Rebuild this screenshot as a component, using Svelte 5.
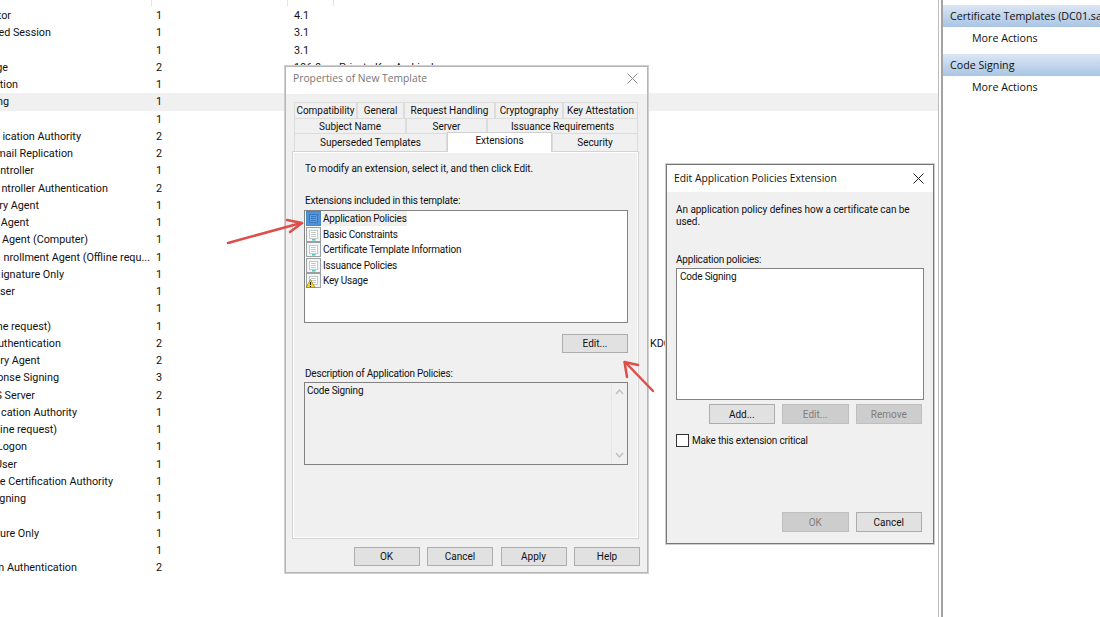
<script>
  const rows = [
    ['tor', 11, 1, '4.1', ''],
    ['ted Session', 51, 1, '3.1', ''],
    ['', 0, 1, '3.1', ''],
    ['ge', 8, 2, '106.0', 'Private Key Archival'],
    ['tion', 18, 1, '', ''],
    ['ng', 9, 1, '', ''],
    ['', 0, 1, '', ''],
    ['ication Authority', 81, 2, '', ''],
    ['mail Replication', 73, 2, '', ''],
    ['ntroller', 34, 1, '', ''],
    ['ntroller Authentication', 108, 2, '', ''],
    ['ry Agent', 39, 1, '', ''],
    ['Agent', 29, 1, '', ''],
    ['Agent (Computer)', 88, 1, '', ''],
    ['nrollment Agent (Offline requ...', 150, 1, '', ''],
    ['ignature Only', 64, 1, '', ''],
    ['ser', 15, 1, '', ''],
    ['', 0, 1, '', ''],
    ['ne request)', 51, 1, '', ''],
    ['uthentication', 61, 2, '', 'KDC', 311],
    ['ry Agent', 40, 2, '', ''],
    ['onse Signing', 59, 3, '', ''],
    ['S Server', 35, 2, '', ''],
    ['cation Authority', 77, 1, '', ''],
    ['line request)', 57, 1, '', ''],
    ['Logon', 27, 1, '', ''],
    ['User', 17, 1, '', ''],
    ['e Certification Authority', 113, 1, '', ''],
    ['gning', 26, 1, '', ''],
    ['', 0, 1, '', ''],
    ['ure Only', 39, 1, '', ''],
    ['', 0, 1, '', ''],
    ['n Authentication', 77, 2, '', '']
  ];
  const tabRows = [
    [['Compatibility', 63], ['General', 47], ['Request Handling', 91], ['Cryptography', 68], ['Key Attestation', 75]],
    [['Subject Name', 112], ['Server', 81], ['Issuance Requirements', 151]],
    [['Superseded Templates', 153], ['Extensions', 105], ['Security', 86]]
  ];
  const exts = [
    ['Application Policies', 'sel'],
    ['Basic Constraints', ''],
    ['Certificate Template Information', ''],
    ['Issuance Policies', ''],
    ['Key Usage', 'warn']
  ];
</script>

<div class="desk">
  <div class="center">
    <div class="heads"><i></i><i></i><i></i></div>
    {#each rows as r, i}
      <div class="row" class:hl={i === 5}>
        <div class="name" style:width="{r[1]}px"><span>{r[0]}</span></div>
        <div class="ver" style:margin-left="{156 - r[1]}px">{r[2]}</div>
        <div class="min">{r[3]}</div>
        <div class="purpose" style:margin-left="{r[5] || 0}px">{r[4]}</div>
      </div>
    {/each}
  </div>
  <div class="split"></div>
  <div class="actions">
    <div class="ahead">Certificate Templates (DC01.san</div>
    <div class="aitem">More Actions</div>
    <div class="ahead">Code Signing</div>
    <div class="aitem">More Actions</div>
  </div>

  <section class="win props">
    <header class="title dim"><span>Properties of New Template</span>
      <svg width="11" height="11" viewBox="0 0 11 11"><path d="M.5.5l10 10M10.500.5l-10 10" stroke="#8a8a8a" fill="none"/></svg>
    </header>
    <div class="body">
      <div class="tabs">
        {#each tabRows as tr}
          <div class="tabrow">
            {#each tr as t}
              <div class="tab" class:active={t[0] === 'Extensions'} style:width="{t[1]}px">{t[0]}</div>
            {/each}
          </div>
        {/each}
      </div>
      <div class="panel">
        <p class="hint">To modify an extension, select it, and then click Edit.</p>
        <p class="first tight">Extensions included in this template:</p>
        <div class="list">
          {#each exts as e}
            <div class="ext">
              <svg width="15" height="15" viewBox="0 0 15 15" class="ico">
                <rect x=".5" y=".5" width="14" height="14" fill={e[1] === 'sel' ? '#4f94d8' : '#f1f4f4'} stroke={e[1] === 'sel' ? '#4a86c4' : '#9a9fa1'}/>
                <rect x="3.500" y="3.500" width="8" height="8" fill={e[1] === 'sel' ? '#5f9fe0' : '#fff'} stroke={e[1] === 'sel' ? '#3a78bd' : '#c4caca'}/>
                <path d="M5 5.500h5M5 7.500h5M5 9.500h5" stroke={e[1] === 'sel' ? '#3a78bd' : '#c4caca'} fill="none"/>
                {#if e[1] === 'warn'}
                  <path d="M4.500 6.500L9 14.500H0z" fill="#f7d417" stroke="#8a7a10" stroke-width=".6"/>
                  <path d="M4.500 9v3M4.500 13v1" stroke="#222" fill="none"/>
                {:else if e[1] !== 'sel'}
                  <path d="M6 12.800h3.500" stroke="#4fc3c3" stroke-width="1.500"/>
                {/if}
              </svg>
              <span class="tight" class:seltext={e[1] === 'sel'}>{e[0]}</span>
            </div>
          {/each}
        </div>
        <div class="editrow"><button class="btn">Edit...</button></div>
        <p class="desc tight">Description of Application Policies:</p>
        <div class="descbox">
          <span class="tight">Code Signing</span>
          <div class="sb">
            <svg width="9" height="6" viewBox="0 0 9 6"><path d="M1 5l3.500-4 3.500 4" stroke="#bdbdbd" stroke-width="1.300" fill="none"/></svg>
            <svg width="9" height="6" viewBox="0 0 9 6"><path d="M1 1l3.500 4 3.500-4" stroke="#bdbdbd" stroke-width="1.300" fill="none"/></svg>
          </div>
        </div>
      </div>
      <div class="foot">
        <button class="btn">OK</button><button class="btn">Cancel</button><button class="btn">Apply</button><button class="btn">Help</button>
      </div>
    </div>
  </section>

  <section class="win edit">
    <header class="title"><span>Edit Application Policies Extension</span>
      <svg width="11" height="11" viewBox="0 0 11 11"><path d="M.5.5l10 10M10.500.5l-10 10" stroke="#222" fill="none"/></svg>
    </header>
    <div class="ebody">
      <p class="intro">An application policy defines how a certificate can be used.</p>
      <p class="lab tight">Application policies:</p>
      <div class="elist tight">Code Signing</div>
      <div class="ebtns">
        <button class="btn">Add...</button><button class="btn off">Edit...</button><button class="btn off">Remove</button>
      </div>
      <label class="crit tight"><span class="box"></span>Make this extension critical</label>
      <div class="ebtns efoot">
        <button class="btn off">OK</button><button class="btn">Cancel</button>
      </div>
    </div>
  </section>

  <svg class="arrows" width="1100" height="617" viewBox="0 0 1100 617">
    <g fill="none" stroke="#de4e4a" stroke-width="2.500" stroke-linecap="round" stroke-linejoin="round">
      <path d="M228 243L301 223"/>
      <path d="M287 220L302 223L290 232"/>
      <path d="M653 391L626 363"/>
      <path d="M627 377L624.500 362L638 365"/>
    </g>
  </svg>
</div>

<style>
  :global(body) { margin: 0; background: #fff; }
  .desk {
    position: relative; width: 1100px; height: 617px; overflow: hidden; display: flex;
    font: 10.700px/15px "Open Sans", sans-serif; color: #111; background: #fff;
  }
  .center { width: 938px; flex: none; padding-top: 7px; font: 10.800px/15px Roboto, sans-serif; }
  .heads { position: absolute; left: 0; top: 0; width: 938px; height: 6px; }
  .heads i { position: absolute; top: 0; height: 6px; width: 1px; background: #e4e4e4; }
  .heads i:nth-child(1) { left: 151px; }
  .heads i:nth-child(2) { left: 287px; }
  .heads i:nth-child(3) { left: 333px; }
  .row { display: flex; height: 17.250px; align-items: center; white-space: nowrap; }
  .row.hl { background: #f0f0f0; }
  .name { flex: none; display: flex; justify-content: flex-end; }
  .name span { flex: none; }
  .ver { width: 138px; flex: none; }
  .min { width: 45px; flex: none; }
  .split {
    width: 5px; flex: none; background: #fff; box-sizing: border-box;
    border-left: 1px solid #bdbdbd; border-right: 2px solid #a3a3a3;
  }
  .actions { flex: 1; min-width: 0; white-space: nowrap; overflow: hidden; padding-top: 5px; }
  .ahead {
    height: 22px; line-height: 22px; padding-left: 7px;
    background: linear-gradient(#dbe6f3, #a9c5e3);
  }
  .aitem { height: 27px; line-height: 22px; padding-left: 29px; box-sizing: border-box; }
  .win {
    position: absolute; box-sizing: border-box; display: flex; flex-direction: column;
    background: #f0f0f0; border: 1px solid #8c8c8c; box-shadow: 0 0 0 1px #cfcfcf;
    font: 10px/15px Roboto, sans-serif; letter-spacing: -.05px;
  }
  .tight { letter-spacing: -.2px; }
  .props { left: 285px; top: 66px; width: 363px; height: 507px; border-color: #b5b5b5; }
  .edit { left: 666px; top: 164px; width: 268px; height: 380px; border-color: #777; }
  .title {
    flex: none; height: 27px; box-sizing: border-box; background: #fff; display: flex; align-items: center;
    justify-content: space-between; padding: 0 9px 4px 7px; font: 10.300px/15px "Open Sans", sans-serif; letter-spacing: 0;
  }
  .edit .title { padding-bottom: 1px; }
  .dim { color: #777; }
  .body { flex: 1; min-height: 0; display: flex; flex-direction: column; padding: 8px 8px 0 6px; }
  .tabs { margin-left: 2px; }
  .tabrow { display: flex; height: 15.500px; }
  .tabrow:nth-child(3) { height: 18px; }
  .tabrow:nth-child(3) .tab { padding-top: 2px; }
  .tab {
    box-sizing: border-box; text-align: center; border: 1px solid #dcdcdc; border-bottom: 0;
    line-height: 14px; background: #f0f0f0; white-space: nowrap; padding-top: 1px;
  }
  .tabrow .tab.active { background: #fff; border-color: #d0d0d0; position: relative; z-index: 1; margin-top: -1px; height: 20px; padding-top: 1px; }
  .panel {
    flex: none; height: 388px; box-sizing: border-box; background: #f0f0f0;
    border: 1px solid #d4d4d4; box-shadow: inset 0 0 0 1px #fff; padding: 9px 10px 0 12px;
  }
  p { margin: 0; }
  .first { margin-top: 17px; }
  .list {
    box-sizing: border-box; height: 113px; margin-top: 2px; margin-left: -1px; background: #fff;
    border: 1px solid #828282; padding: 0 0 0 1px;
  }
  .ext { display: flex; align-items: center; gap: 2px; height: 15.500px; }
  .ico { flex: none; }
  .seltext { background: #f0f0f0; }
  .editrow { display: flex; justify-content: flex-end; margin-top: 11px; }
  .desc { margin-top: 13px; }
  .descbox {
    box-sizing: border-box; height: 83px; margin-top: 1px; margin-left: -1px; border: 1px solid #828282;
    padding: 0 0 0 2px; display: flex; justify-content: space-between; background: #f0f0f0;
  }
  .sb {
    width: 16px; display: flex; flex-direction: column; justify-content: space-between; align-items: center;
    border-left: 1px solid #e6e6e6; padding: 6px 0; box-sizing: border-box;
  }
  .btn {
    box-sizing: border-box; width: 66px; height: 19px; padding: 0; margin: 0;
    background: #e1e1e1; border: 1px solid #adadad; font: inherit; color: #111;
  }
  .btn.off { background: #cdcdcd; border-color: #bfbfbf; color: #7e7e7e; }
  .foot { display: flex; justify-content: flex-end; gap: 7.500px; margin-top: 8px; margin-right: -1px; }
  .ebody { flex: 1; min-height: 0; padding: 12px 9px 0; display: flex; flex-direction: column; }
  .intro { width: 245px; line-height: 11.500px; }
  .lab { margin-top: 25px; }
  .elist {
    box-sizing: border-box; flex: none; height: 132px; margin-top: 1px; background: #fff;
    border: 1px solid #828282; padding: 0 3px;
  }
  .ebtns { display: flex; justify-content: flex-end; gap: 7px; margin-top: 4px; padding-right: 2px; }
  .ebtns .btn { width: 66.500px; height: 20px; }
  .crit { display: flex; align-items: center; gap: 3px; margin-top: 9px; }
  .box { width: 11px; height: 11px; background: #fff; border: 1px solid #333; flex: none; }
  .ebtns.efoot { margin-top: 64px; }
  .arrows { position: absolute; left: 0; top: 0; pointer-events: none; }
</style>
